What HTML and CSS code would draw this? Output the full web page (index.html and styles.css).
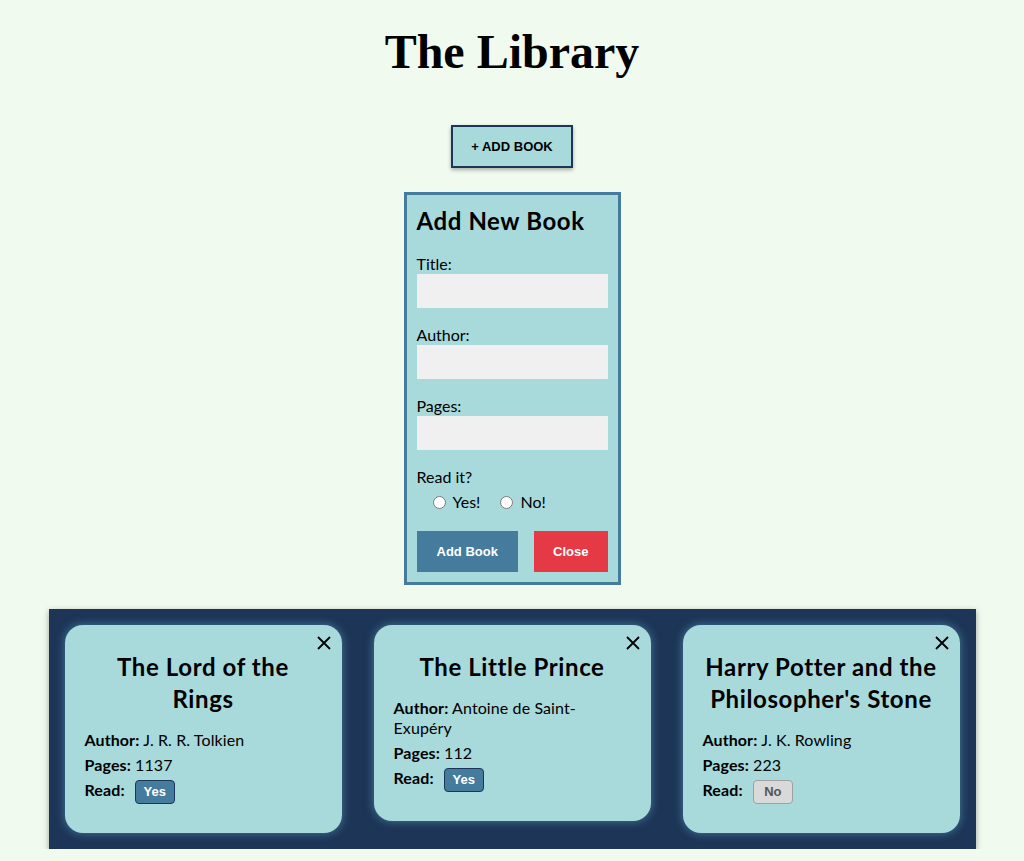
FILE: index.html
```html
<!DOCTYPE html>
<html lang="en">
<head>
<meta charset="utf-8">
<title>The Library</title>
<link rel="stylesheet" href="styles.css">
</head>
<body>
<main class="page">
  <h1 class="page-title">The Library</h1>
  <button class="open-btn" type="button">+ ADD BOOK</button>

  <form class="book-form">
    <h2 class="form-title">Add New Book</h2>
    <div class="field">
      <label class="field-label" for="title">Title:</label>
      <input class="field-input" id="title" type="text">
    </div>
    <div class="field">
      <label class="field-label" for="author">Author:</label>
      <input class="field-input" id="author" type="text">
    </div>
    <div class="field">
      <label class="field-label" for="pages">Pages:</label>
      <input class="field-input" id="pages" type="text">
    </div>
    <div class="field">
      <span class="field-label">Read it?</span>
      <div class="radio-row">
        <label class="radio"><input type="radio" name="read">Yes!</label>
        <label class="radio"><input type="radio" name="read">No!</label>
      </div>
    </div>
    <div class="form-actions">
      <button class="btn btn-add" type="button">Add Book</button>
      <button class="btn btn-close" type="button">Close</button>
    </div>
  </form>

  <section class="shelf">
    <article class="card">
      <button class="card-remove" type="button" aria-label="Remove"><svg width="14" height="14" viewBox="0 0 14 14"><path d="M1 1L13 13M13 1L1 13" stroke="#000" stroke-width="1.8"/></svg></button>
      <h2 class="card-title">The Lord of the Rings</h2>
      <p class="card-line"><b>Author:</b> J. R. R. Tolkien</p>
      <p class="card-line"><b>Pages:</b> 1137</p>
      <p class="card-line"><b>Read:</b> <span class="read-btn read-yes">Yes</span></p>
    </article>
    <article class="card">
      <button class="card-remove" type="button" aria-label="Remove"><svg width="14" height="14" viewBox="0 0 14 14"><path d="M1 1L13 13M13 1L1 13" stroke="#000" stroke-width="1.8"/></svg></button>
      <h2 class="card-title">The Little Prince</h2>
      <p class="card-line"><b>Author:</b> Antoine de Saint-Exupéry</p>
      <p class="card-line"><b>Pages:</b> 112</p>
      <p class="card-line"><b>Read:</b> <span class="read-btn read-yes">Yes</span></p>
    </article>
    <article class="card">
      <button class="card-remove" type="button" aria-label="Remove"><svg width="14" height="14" viewBox="0 0 14 14"><path d="M1 1L13 13M13 1L1 13" stroke="#000" stroke-width="1.8"/></svg></button>
      <h2 class="card-title">Harry Potter and the Philosopher's Stone</h2>
      <p class="card-line"><b>Author:</b> J. K. Rowling</p>
      <p class="card-line"><b>Pages:</b> 223</p>
      <p class="card-line"><b>Read:</b> <span class="read-btn read-no">No</span></p>
    </article>
  </section>
</main>
</body>
</html>
```

FILE: styles.css
```css
* { box-sizing: border-box; }

html, body {
  margin: 0;
  background: #f1faee;
}

body {
  font-family: Lato, "Open Sans", sans-serif;
  color: #000;
}

.page {
  display: flex;
  flex-direction: column;
  align-items: center;
  padding-top: 24px;
}

.page-title {
  margin: 0;
  font-family: "Liberation Serif", serif;
  font-size: 48px;
  font-weight: bold;
  line-height: 55px;
}

.open-btn {
  margin-top: 46px;
  height: 43px;
  padding: 0 18px;
  background: #a8dadc;
  border: 2px solid #1d3557;
  box-shadow: 0 2px 4px rgba(0, 0, 0, 0.3);
  font-family: "Liberation Sans", Arial, sans-serif;
  font-size: 13px;
  font-weight: bold;
  color: #000;
}

.book-form {
  margin-top: 24px;
  width: 217px;
  padding: 10px;
  background: #a8dadc;
  border: 3px solid #457b9d;
  display: flex;
  flex-direction: column;
}

.form-title {
  margin: 0;
  font-size: 24px;
  line-height: 32px;
  font-weight: bold;
  letter-spacing: 0.6px;
}

.field {
  margin-top: 17px;
  display: flex;
  flex-direction: column;
}

.field-label {
  font-size: 16px;
  line-height: 20px;
}

.field-input {
  height: 34px;
  border: none;
  background: #f0f0f0;
  padding: 0 6px;
  font: inherit;
}

.radio-row {
  display: flex;
  gap: 20px;
  padding-left: 16px;
  margin-top: 5px;
}

.radio {
  display: flex;
  align-items: center;
  font-size: 16px;
  line-height: 20px;
}

.radio input {
  margin: 0 7px 0 0;
  width: 13px;
  height: 13px;
}

.form-actions {
  margin-top: 19px;
  display: flex;
  justify-content: space-between;
}

.btn {
  height: 41px;
  padding: 0 19px;
  border: none;
  font-family: "Liberation Sans", Arial, sans-serif;
  font-size: 13px;
  font-weight: bold;
  color: #fff;
}

.btn-add { background: #457b9d; padding: 0 20px; }
.btn-close { background: #e63946; }

.shelf {
  margin-top: 24px;
  width: 927px;
  padding: 16px;
  background: #1d3557;
  box-shadow: 0 2px 6px rgba(0, 0, 0, 0.35);
  display: grid;
  grid-template-columns: repeat(3, 1fr);
  gap: 32px;
  align-items: start;
}

.card {
  position: relative;
  background: #a8dadc;
  border-radius: 18px;
  padding: 26px 20px 29px;
  box-shadow: 0 0 10px #457b9d;
}

.card-remove {
  position: absolute;
  top: 11px;
  right: 11px;
  width: 14px;
  height: 14px;
  padding: 0;
  border: none;
  background: none;
  line-height: 0;
}

.card-title {
  margin: 0 0 15px;
  text-align: center;
  font-size: 24px;
  line-height: 32px;
  font-weight: bold;
  letter-spacing: 0.6px;
}

.card-line {
  margin: 5px 0 0;
  font-size: 16px;
  line-height: 20px;
  letter-spacing: 0.1px;
}

.card-line b { font-weight: bold; }

.read-btn {
  display: inline-block;
  margin-left: 6px;
  min-width: 40px;
  padding: 0 6px;
  height: 24px;
  line-height: 22px;
  border-radius: 4px;
  text-align: center;
  font-family: "Liberation Sans", Arial, sans-serif;
  font-size: 13px;
  font-weight: bold;
  letter-spacing: 0;
  vertical-align: middle;
}

.read-yes {
  background: #457b9d;
  border: 1px solid #1d3557;
  color: #fff;
}

.read-no {
  background: #d9d9d9;
  border: 1px solid #a0a0a0;
  color: #555;
}
```
